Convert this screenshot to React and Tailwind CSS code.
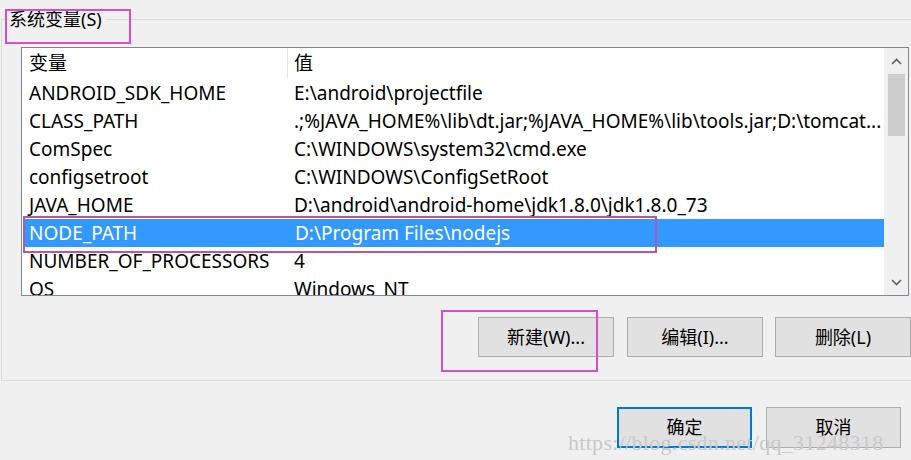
import React from "react";

const rows = [
  ["ANDROID_SDK_HOME", "E:\\android\\projectfile"],
  ["CLASS_PATH", ".;%JAVA_HOME%\\lib\\dt.jar;%JAVA_HOME%\\lib\\tools.jar;D:\\tomcat..."],
  ["ComSpec", "C:\\WINDOWS\\system32\\cmd.exe"],
  ["configsetroot", "C:\\WINDOWS\\ConfigSetRoot"],
  ["JAVA_HOME", "D:\\android\\android-home\\jdk1.8.0\\jdk1.8.0_73"],
  ["NODE_PATH", "D:\\Program Files\\nodejs"],
  ["NUMBER_OF_PROCESSORS", "4"],
  ["OS", "Windows_NT"],
];

function Btn({ children, className = "", primary = false }) {
  return (
    <div
      className={
        "flex items-center justify-center bg-[#e1e1e1] text-[18px] text-black " +
        (primary ? "border-2 border-[#0078d7] " : "border border-[#adadad] ") +
        className
      }
    >
      {children}
    </div>
  );
}

export default function App() {
  return (
    <div
      className="relative w-[911px] h-[460px] overflow-hidden bg-[#f0f0f0] text-black"
      style={{ fontFamily: '"Noto Sans", "Noto Sans CJK SC", sans-serif' }}
    >
      {/* group box */}
      <div className="ml-[1px] mt-[19px] h-[362px] border-l border-t border-b border-[#dcdcdc] flex flex-col">
        <div className="-mt-[12px] ml-[7px] self-start bg-[#f0f0f0] pr-1 text-[18px] leading-[22px]">
          系统变量(S)
        </div>
        {/* list box */}
        <div className="mt-[17px] ml-[19px] w-[888px] h-[249px] border border-[#828790] bg-white flex">
          <div className="flex-1 min-w-0 flex flex-col overflow-hidden">
            <div className="h-[31px] flex items-center text-[19px] shrink-0">
              <div className="w-[266px] pl-[7px] border-r border-[#e5e5e5] h-full flex items-center">变量</div>
              <div className="pl-[6px]">值</div>
            </div>
            {rows.map(([k, v]) => {
              const sel = k === "NODE_PATH";
              return (
                <div
                  key={k}
                  className={
                    "h-[28px] shrink-0 flex items-center text-[19px] whitespace-nowrap overflow-hidden " +
                    (sel ? "bg-[#3399ff] text-white ml-[1px]" : "")
                  }
                >
                  <div className={"w-[266px] shrink-0 " + (sel ? "pl-[6px]" : "pl-[7px]")}>{k}</div>
                  <div className="pl-[6px]">{v}</div>
                </div>
              );
            })}
          </div>
          {/* scrollbar */}
          <div className="w-[24px] bg-[#f0f0f0] flex flex-col items-center shrink-0">
            <div className="h-[26px] flex items-center justify-center">
              <svg width="11" height="7" viewBox="0 0 11 7">
                <path d="M1 6 L5.5 1.5 L10 6" fill="none" stroke="#606060" strokeWidth="1.6" />
              </svg>
            </div>
            <div className="w-[17px] h-[62px] bg-[#cdcdcd]" />
            <div className="flex-1" />
            <div className="h-[26px] flex items-center justify-center">
              <svg width="11" height="7" viewBox="0 0 11 7">
                <path d="M1 1 L5.5 5.5 L10 1" fill="none" stroke="#606060" strokeWidth="1.6" />
              </svg>
            </div>
          </div>
        </div>
        {/* buttons */}
        <div className="mt-[21px] ml-[476px] flex gap-[12px]">
          <Btn className="w-[136px] h-[40px]">新建(W)...</Btn>
          <Btn className="w-[136px] h-[40px] ml-[1px]">编辑(I)...</Btn>
          <Btn className="w-[136px] h-[40px]">删除(L)</Btn>
        </div>
      </div>

      {/* dialog buttons */}
      <div className="mt-[26px] ml-[617px] flex gap-[14px]">
        <Btn primary className="w-[135px] h-[41px]">确定</Btn>
        <Btn className="w-[135px] h-[41px]">取消</Btn>
      </div>

      {/* watermark */}
      <div
        className="absolute left-[568px] top-[426px] text-[22px] text-[#c9c9c9] whitespace-nowrap pointer-events-none"
        style={{ fontFamily: '"Liberation Serif", serif', letterSpacing: "0.3px" }}
      >
        https://blog.csdn.net/qq_31248318
      </div>

      {/* annotations */}
      <div className="absolute left-[5px] top-[9px] w-[126px] h-[35px] border-2 border-[#d24fc8] pointer-events-none" />
      <div className="absolute left-[23px] top-[216px] w-[634px] h-[37px] border-2 border-[#b455b4] pointer-events-none" />
      <div className="absolute left-[441px] top-[310px] w-[157px] h-[62px] border-2 border-[#d24fc8] pointer-events-none" />
    </div>
  );
}
